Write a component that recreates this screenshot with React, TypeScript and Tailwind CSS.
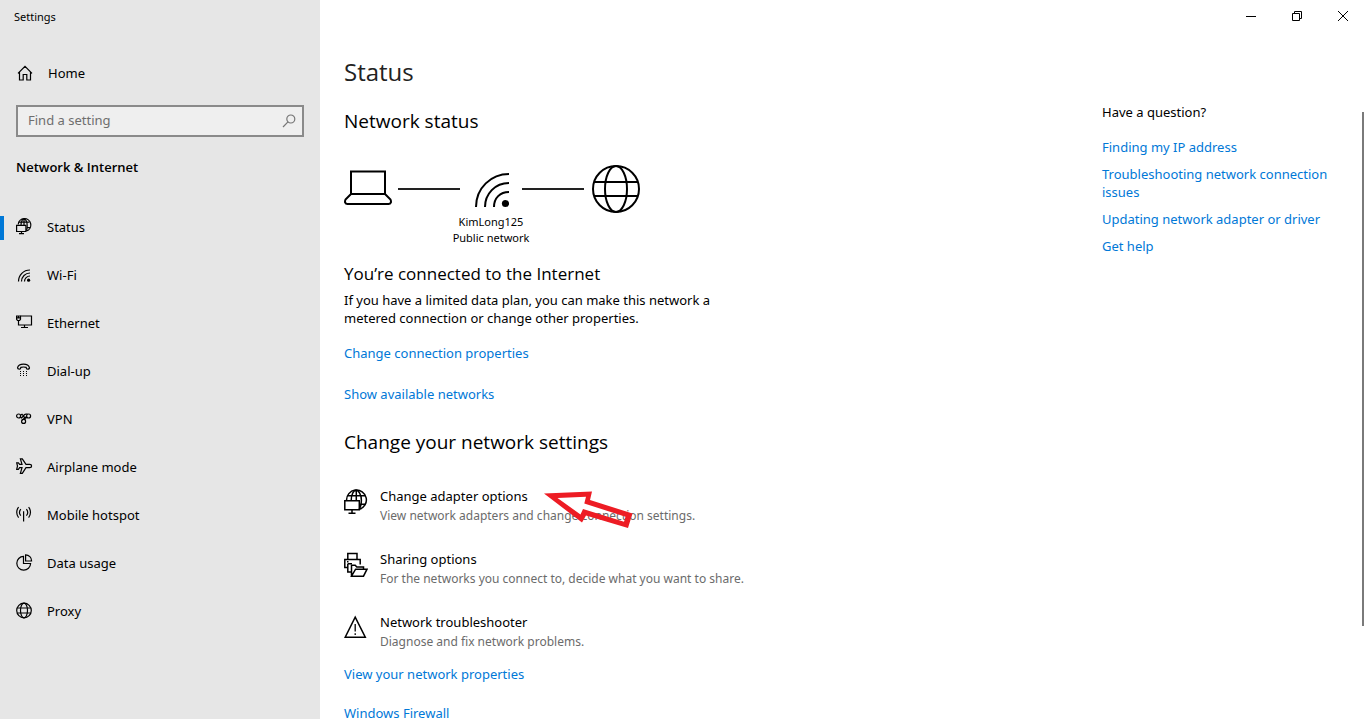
import type { ReactNode } from "react";

type IconName =
  | "status"
  | "wifi"
  | "ethernet"
  | "dialup"
  | "vpn"
  | "airplane"
  | "hotspot"
  | "data"
  | "proxy";

const NAV: { icon: IconName; label: string }[] = [
  { icon: "status", label: "Status" },
  { icon: "wifi", label: "Wi-Fi" },
  { icon: "ethernet", label: "Ethernet" },
  { icon: "dialup", label: "Dial-up" },
  { icon: "vpn", label: "VPN" },
  { icon: "airplane", label: "Airplane mode" },
  { icon: "hotspot", label: "Mobile hotspot" },
  { icon: "data", label: "Data usage" },
  { icon: "proxy", label: "Proxy" },
];

const HELP_LINKS = [
  "Finding my IP address",
  "Troubleshooting network connection issues",
  "Updating network adapter or driver",
  "Get help",
];

const NAV_ICONS: Record<IconName, ReactNode> = {
  status: (
    <>
      <path d="M2.2 6.5A6.3 6.3 0 1 1 10.5 12.9" />
      <path d="M2.6 4.2H13.4M10.5 9.6H14.1M5 7.4C5 3.5 6.4 .8 8 .8S11.2 4 11.2 7.4 11 11.2 10.4 12.8M8 .8V7.4" />
      <path d="M.6 7.4H9.9V13.5H.6ZM5.5 13.5V15.6M3 15.6H8" />
    </>
  ),
  wifi: (
    <>
      <path d="M2.5 15.5C2.5 9 7.5 4 14 4M5.5 15.5C5.5 10.8 9.3 7 14 7M8.5 15.5C8.5 12.5 11 10 14 10" />
      <circle cx="12.6" cy="14.2" r="1.6" fill="currentColor" stroke="none" />
    </>
  ),
  ethernet: (
    <>
      <path d="M4.5 2H15.5V11H2.5V6.5M8.5 11V13.5M5 13.5H12" />
      <path d="M.6 2H4.5V5.2L3.6 6.5H1.5L.6 5.2ZM.6 3.8H4.5M2.5 2V3.8" />
    </>
  ),
  dialup: (
    <>
      <path d="M1.5 5.8C2.2 3.2 5 2.2 7.5 2.2S12.8 3.2 13.5 5.8C13.5 7 12.6 7.2 11.6 7.2S10.2 6.6 10.2 5.4C8.6 4.9 6.4 4.9 4.8 5.4 4.8 6.6 4.4 7.2 3.4 7.2S1.5 7 1.5 5.8Z" />
      <path d="M4 9.5H5M7 9.5H8M10 9.5H11M4 11.5H5M7 11.5H8M10 11.5H11M4 13.5H5M7 13.5H8M10 13.5H11" strokeWidth="1" />
    </>
  ),
  vpn: (
    <>
      <circle cx="2.6" cy="6" r="2" />
      <circle cx="12.6" cy="6" r="2" />
      <circle cx="7.6" cy="11.4" r="2" />
      <path d="M4.4 5.2L6 4.2L7.4 5.8L9.4 9.8M11 7.4L9.4 8.2L8 6.6M4.4 7.2L5.6 8L8.6 4.6L10 4L11.6 4.2M10.6 6.4L6 10.2" />
    </>
  ),
  airplane: (
    <path d="M4.4 .8H6.3L10 6.3H13.7C15 6.3 15.6 7.2 15.6 8S15 9.7 13.7 9.7H10L6.3 15.4H4.4L6 9.7H3.6L2.4 11.4H.7L1.5 8 .7 4.8H2.4L3.6 6.3H6Z" />
  ),
  hotspot: (
    <path d="M2.6 1.2C.1 4 .1 8.6 2.6 11.6M4.8 3.2C3.3 5 3.3 7.8 4.8 9.6M10.4 3.2C11.9 5 11.9 7.8 10.4 9.6M12.6 1.2C15.1 4 15.1 8.6 12.6 11.6M7.6 5.3V15.5" />
  ),
  data: (
    <>
      <path d="M7.5 2.4A6.9 6.9 0 1 0 14.6 9.5H7.5Z" />
      <path d="M9.6 .9V7H15.6A6 6 0 0 0 9.6 .9Z" />
    </>
  ),
  proxy: (
    <>
      <circle cx="8" cy="8.5" r="7.3" />
      <ellipse cx="8" cy="8.5" rx="3.5" ry="7.3" />
      <path d="M1.2 6H14.8M1.2 11H14.8" />
    </>
  ),
};

function NavIcon({ name }: { name: IconName }) {
  return (
    <svg
      width="17"
      height="17"
      viewBox="0 0 17 17"
      fill="none"
      stroke="currentColor"
      strokeWidth="1.2"
      className="mb-1"
      aria-hidden
    >
      {NAV_ICONS[name]}
    </svg>
  );
}

function TextLink({ children }: { children: ReactNode }) {
  return (
    <a href="#" className="text-[#0078d7] hover:text-gray-500">
      {children}
    </a>
  );
}

function Option({ icon, title, note, children }: { icon: ReactNode; title: string; note: string; children?: ReactNode }) {
  return (
    <div className="relative flex">
      <button type="button" className="flex items-start text-left">
        <svg
          width="24"
          height="26"
          viewBox="0 0 24 26"
          fill="none"
          stroke="currentColor"
          strokeWidth="1.5"
          className="mr-3 mt-[3px] shrink-0"
          aria-hidden
        >
          {icon}
        </svg>
        <span className="block">
          <span className="block leading-5">{title}</span>
          <span className="block text-xs leading-[19px] text-[#6b6b6b]">{note}</span>
        </span>
      </button>
      {children}
    </div>
  );
}

function Sidebar() {
  return (
    <aside className="w-80 shrink-0 bg-[#e6e6e6]">
      <div className="px-3.5 pt-2 text-[11px] leading-[18px]">Settings</div>
      <a href="#" className="mt-8 flex h-8 items-center px-4">
        <svg
          width="17"
          height="17"
          viewBox="0 0 17 17"
          fill="none"
          stroke="currentColor"
          strokeWidth="1.2"
          className="mb-0.5"
          aria-hidden
        >
          <path d="M2 8.4L9 1.4L16 8.4M3.5 7V15H7.2V9.5H10.8V15H14.5V7" />
        </svg>
        <span className="ml-[15px]">Home</span>
      </a>
      <div className="mx-4 mt-[15px] flex h-8 items-center border-2 border-[#8a8a8a] bg-[#efefef] px-2.5">
        <input
          type="text"
          aria-label="Find a setting"
          placeholder="Find a setting"
          className="h-7 min-w-0 flex-1 bg-transparent pb-0.5 outline-none placeholder:text-[#6e6e6e]"
        />
        <svg width="14" height="14" viewBox="0 0 14 14" fill="none" stroke="#767676" strokeWidth="1.2" className="-mr-1" aria-hidden>
          <circle cx="8.8" cy="5" r="4" />
          <path d="M6 7.9L1 13" />
        </svg>
      </div>
      <h2 className="mt-5 px-4 font-['Open_Sans',sans-serif] font-semibold leading-5">Network &amp; Internet</h2>
      <nav className="mt-[27px]">
        {NAV.map((item, i) => (
          <a key={item.label} href="#" className="flex h-12 items-center">
            <span className={i === 0 ? "mr-3 h-6 w-1 bg-[#0078d7]" : "mr-3 h-6 w-1"} />
            <NavIcon name={item.icon} />
            <span className="ml-3.5">{item.label}</span>
          </a>
        ))}
      </nav>
    </aside>
  );
}

function NetworkDiagram() {
  return (
    <div className="mt-[29px] flex items-start">
      <svg width="48" height="50" viewBox="0 0 48 50" fill="none" stroke="#000" strokeWidth="2" role="img" aria-label="This computer">
        <path d="M7 7.5H41V30H7ZM7 30L1.5 35.5C.5 38 1 40 3.5 40H44.5C47 40 47.5 38 46.5 35.5L41 30" />
      </svg>
      <div className="ml-1.5 mt-6 h-0.5 w-[62px] bg-[#222]" />
      <div className="flex w-[62px] flex-col items-center">
        <svg width="36" height="50" viewBox="0 0 36 50" fill="none" stroke="#000" strokeWidth="2" aria-hidden>
          <path d="M3 43C3 24 18 10 36 10M12 43C12 30 22 19 36 19M21 43C21 34 27 28 36 28" />
          <circle cx="32.5" cy="39.5" r="3.6" fill="#000" stroke="none" />
        </svg>
        <div className="whitespace-nowrap text-center text-[11px] leading-4">
          KimLong125
          <br />
          Public network
        </div>
      </div>
      <div className="mt-6 h-0.5 w-[62px] bg-[#222]" />
      <svg
        width="50"
        height="50"
        viewBox="0 0 50 50"
        fill="none"
        stroke="#000"
        strokeWidth="2"
        className="ml-[7px]"
        role="img"
        aria-label="Internet"
      >
        <circle cx="25" cy="25" r="23" />
        <ellipse cx="25" cy="25" rx="11" ry="23" />
        <path d="M3 18H47M3 32H47" />
      </svg>
    </div>
  );
}

function WindowButtons() {
  return (
    <div className="flex justify-end">
      <button type="button" aria-label="Minimize" className="flex h-8 w-[46px] items-center justify-center">
        <svg width="10" height="10" viewBox="0 0 10 10" stroke="#000">
          <path d="M0 5.5H10" />
        </svg>
      </button>
      <button type="button" aria-label="Restore" className="flex h-8 w-[46px] items-center justify-center">
        <svg width="10" height="10" viewBox="0 0 10 10" fill="none" stroke="#000">
          <path d="M.5 2.5H7.5V9.5H.5ZM2.5 2.5V.5H9.5V7.5H7.5" />
        </svg>
      </button>
      <button type="button" aria-label="Close" className="flex h-8 w-[46px] items-center justify-center">
        <svg width="10" height="10" viewBox="0 0 10 10" stroke="#000">
          <path d="M0 0L10 10M10 0L0 10" />
        </svg>
      </button>
    </div>
  );
}

export default function App() {
  return (
    <div className="flex h-screen overflow-hidden bg-white font-['Noto_Sans',sans-serif] text-[13px] text-black">
      <Sidebar />
      <div className="flex min-w-0 flex-1 flex-col">
        <WindowButtons />
        <div className="flex min-h-0 flex-1">
          <main className="min-w-0 flex-1 pl-6">
            <h1 className="mt-6 font-['Open_Sans',sans-serif] text-2xl leading-8 text-[#222]">Status</h1>
            <h2 className="mt-[19px] font-['Open_Sans',sans-serif] text-[19px] leading-7">Network status</h2>
            <NetworkDiagram />
            <h3 className="mt-4 font-['Open_Sans',sans-serif] text-[17px] leading-6">You’re connected to the Internet</h3>
            <p className="mt-[5px] max-w-96 leading-[18px]">
              If you have a limited data plan, you can make this network a metered connection or change other
              properties.
            </p>
            <div className="mt-4 leading-5">
              <TextLink>Change connection properties</TextLink>
            </div>
            <div className="mt-[21px] leading-5">
              <TextLink>Show available networks</TextLink>
            </div>
            <h2 className="mt-6 font-['Open_Sans',sans-serif] text-[19px] leading-7">Change your network settings</h2>
            <div className="mt-[30px] space-y-6">
              <Option
                title="Change adapter options"
                note="View network adapters and change connection settings."
                icon={
                  <>
                    <path d="M2.6 11.5A9.9 9.9 0 1 1 15.3 20.4" />
                    <path d="M3.8 6.8H21M15.3 15.2H21.6M7.2 11.8C7.2 5 9.8 1.2 12.3 1.2S17.4 6 17.4 11.5 16.4 17.5 15.3 20.2M12.3 1.2V11.8" />
                    <path d="M.8 11.8H15.3V20.8H.8ZM8 20.8V24.2M4.5 24.2H11.5" />
                  </>
                }
              >
                {/* pointer laid over the first option */}
                <svg
                  width="90"
                  height="40"
                  viewBox="544 490 90 40"
                  fill="#ed1c24"
                  fillRule="evenodd"
                  className="pointer-events-none absolute left-50 top-1"
                  aria-hidden
                >
                  <path d="M544 493.5L592 491.5L590 500L632.5 513.5L628 528L586 515.5L582 522.5ZM557.5 498L586 496.7L584.3 503.5L625.5 516.7L624 521.7L583 509L580.5 514.5Z" />
                </svg>
              </Option>
              <Option
                title="Sharing options"
                note="For the networks you connect to, decide what you want to share."
                icon={
                  <>
                    <path d="M3.8 7.5V1.5H13V7.5M4.5 15.5H.8V7.5H16.2V12.5M3.8 11.8H8M3 9.7H4.5M3.8 11.8V20H7.5" />
                    <path d="M7.5 24.2V13.2H11.2L12.8 15H19.5V17.2M7.5 24.2L11.6 17.2H23L19.5 24.2Z" />
                  </>
                }
              />
              <Option
                title="Network troubleshooter"
                note="Diagnose and fix network problems."
                icon={
                  <>
                    <path d="M11.2 2.2L21.3 22.2H1.2Z" />
                    <path d="M11.2 9V16.5M11.2 18.2V20" strokeWidth="1.3" />
                  </>
                }
              />
            </div>
            <div className="mt-[13px] leading-5">
              <TextLink>View your network properties</TextLink>
            </div>
            <div className="mt-[19px] leading-5">
              <TextLink>Windows Firewall</TextLink>
            </div>
          </main>
          <section className="w-[260px] shrink-0 pt-[71px] leading-[18px]">
            <h2>Have a question?</h2>
            <ul className="mt-[17px] max-w-60 space-y-[9px]">
              {HELP_LINKS.map((text) => (
                <li key={text}>
                  <TextLink>{text}</TextLink>
                </li>
              ))}
            </ul>
          </section>
          <div className="mr-0.5 mt-20 h-[514px] w-0.5 shrink-0 bg-[#7a7a7a]" />
        </div>
      </div>
    </div>
  );
}
